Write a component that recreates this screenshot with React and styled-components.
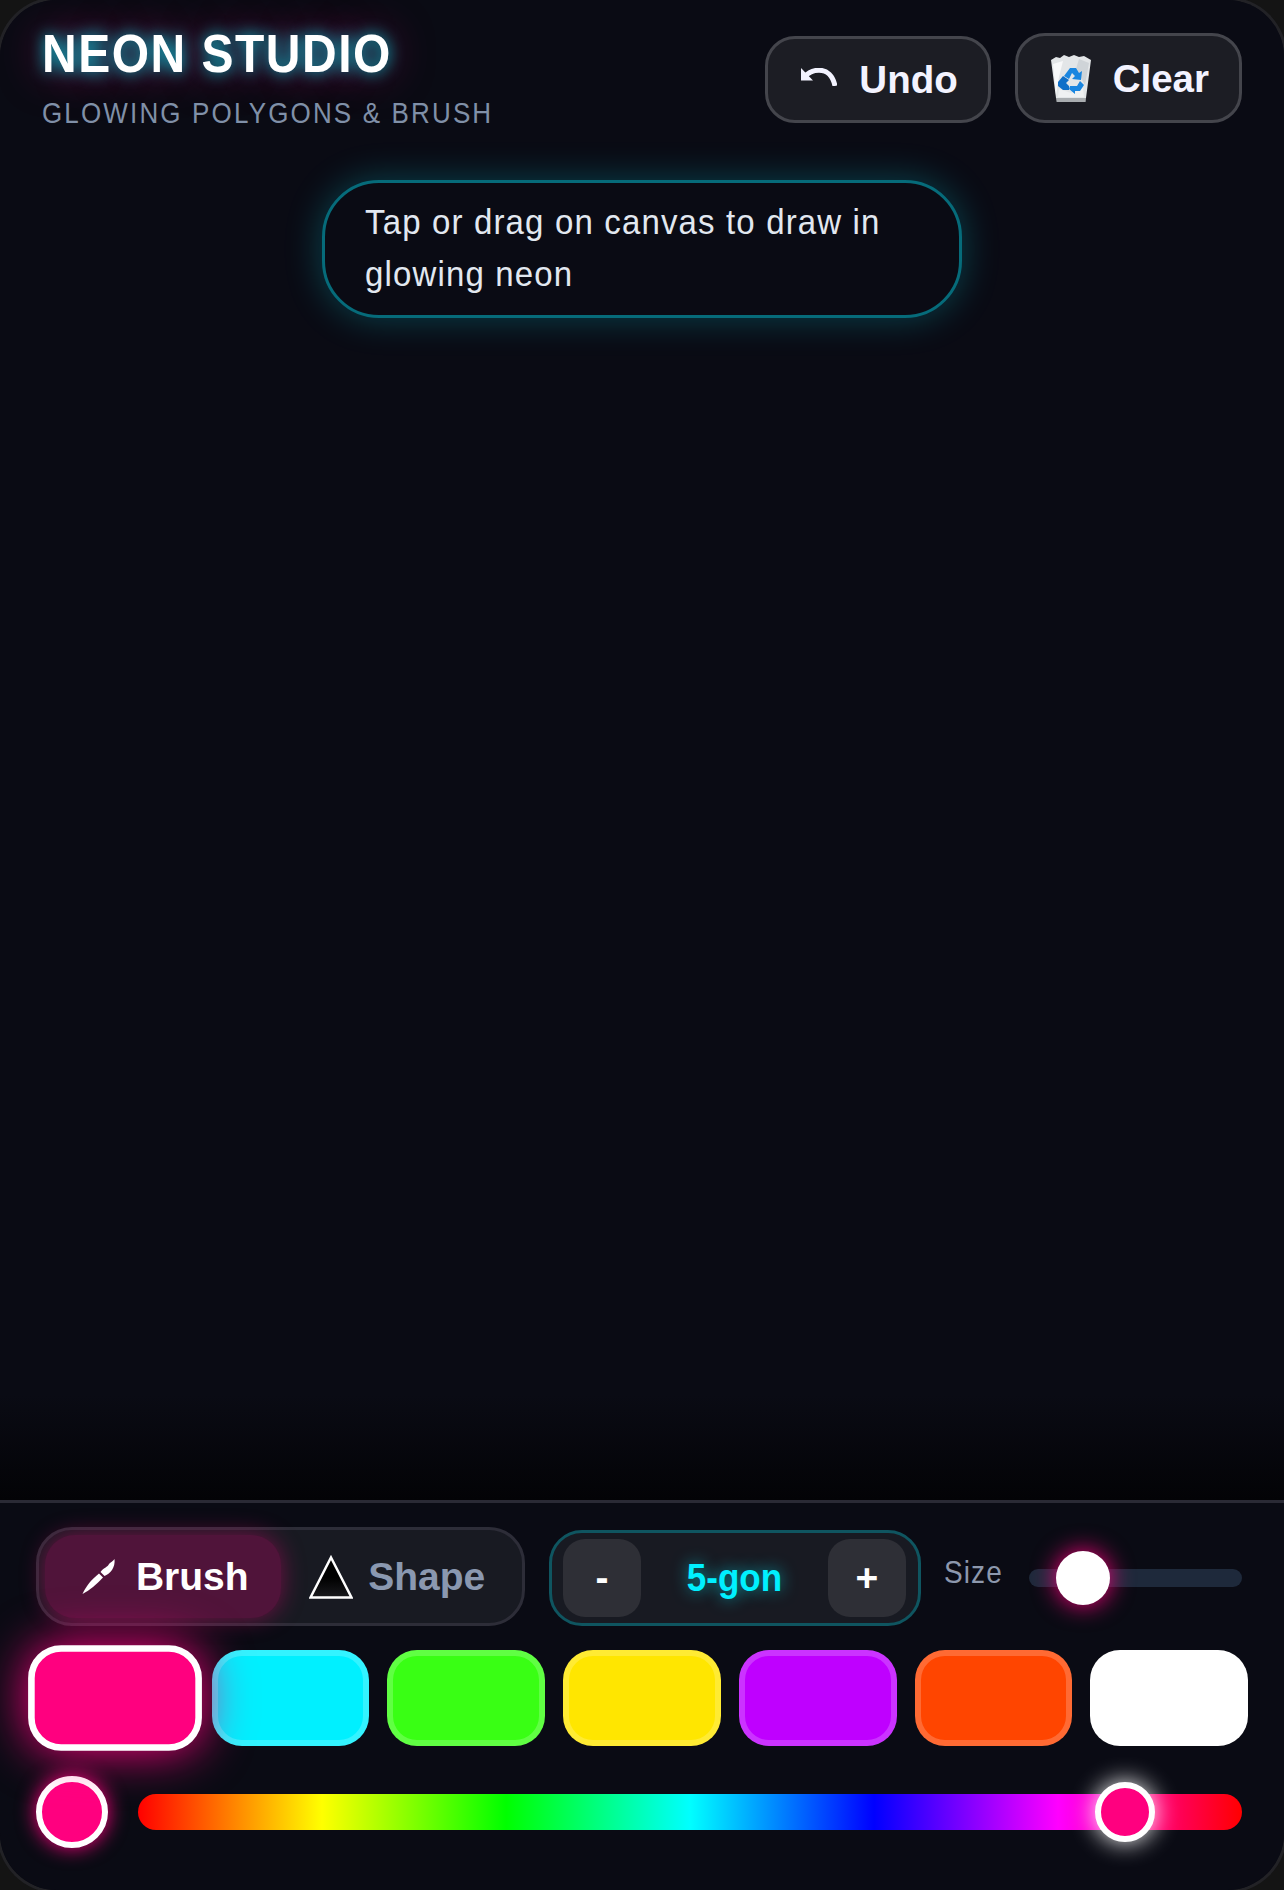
import React from "react";
import styled, { createGlobalStyle, css } from "styled-components";

const swatches = ["#ff007f", "#00f0ff", "#39ff14", "#ffe600", "#bf00ff", "#ff4500", "#ffffff"];

const UndoIcon = () => (
  <UndoSvg viewBox="0 0 36 18">
    <path d="M0 0V12.5H12Z" fill="#f3f3ff" />
    <path d="M3.5 9C8 3.5 13 2.2 18 2.2C26 2.2 32 8 34 18" fill="none" stroke="#f3f3ff" strokeWidth="5" />
  </UndoSvg>
);

const BinIcon = () => (
  <BinSvg viewBox="0 0 40 47">
    <path d="M0 5L5 2L9 3L13 0L18 2L23 0L28 2L33 1L40 5L35 43H5Z" fill="#e3e6e8" />
    <path d="M2 9L12 6L8 22L5 40Z" fill="#f8f9fa" />
    <path d="M28 4L38 8L34 30L25 14Z" fill="#cfd4d8" />
    <path d="M8 34L20 38L32 33L33 42H7Z" fill="#eff1f2" />
    <path d="M5 43H35L34.6 47H5.6Z" fill="#a9adb0" />
    <path d="M13 21L19 13H25L28 18L31 16L30 25L21 24L24 21L21 18L18 24Z" fill="#1a86e0" />
    <path d="M7 27L12 21L18 25L15 28L18 31V35H12L7 31Z" fill="#0f6fc8" />
    <path d="M19 31H26L29 26L33 30L29 36H24V39L18 34Z" fill="#1a86e0" />
  </BinSvg>
);

const BrushIcon = () => (
  <ModeSvg viewBox="0 0 44 35">
    <path d="M5.5 35C9 27 15 20 22 14.5L26 18.5C20 25 13 31 5.5 35Z" fill="#ffffff" />
    <path d="M23.5 13C26 9 31 8 32 5C33.5 3.5 36 2 37.5 0C38 4 37 8 35 11C33 14 30 16 27.5 17Z" fill="#ffffff" />
  </ModeSvg>
);

const TriangleIcon = () => (
  <TriangleSvg viewBox="0 0 44 44">
    <defs>
      <linearGradient id="triangleFill" x1="0" y1="0" x2="0" y2="1">
        <stop offset="0.5" stopColor="#000000" />
        <stop offset="1" stopColor="#1a1a1e" />
      </linearGradient>
    </defs>
    <path d="M22 2.5L42.5 42.5H1.5Z" fill="url(#triangleFill)" stroke="#ffffff" strokeWidth="2.5" />
  </TriangleSvg>
);

const App = () => {
  return (
    <>
      <GlobalStyle />
      <Screen>
        <Stage>
          <Header>
            <Brand>
              <Title>NEON STUDIO</Title>
              <Subtitle>GLOWING POLYGONS &amp; BRUSH</Subtitle>
            </Brand>
            <Actions>
              <ActionButton>
                <UndoIcon />
                Undo
              </ActionButton>
              <ActionButton>
                <BinIcon />
                Clear
              </ActionButton>
            </Actions>
          </Header>
          <Hint>
            <HintText $stretch={1.07}>Tap or drag on canvas to draw in glowing neon</HintText>
          </Hint>
        </Stage>
        <Panel>
          <ToolRow>
            <ModeToggle>
              <ModeButton $active>
                <BrushIcon />
                Brush
              </ModeButton>
              <ModeButton>
                <TriangleIcon />
                Shape
              </ModeButton>
            </ModeToggle>
            <Stepper>
              <StepButton>-</StepButton>
              <StepValue>5-gon</StepValue>
              <StepButton>+</StepButton>
            </Stepper>
            <SizeLabel>Size</SizeLabel>
            <SizeTrack>
              <SizeThumb />
            </SizeTrack>
          </ToolRow>
          <SwatchRow>
            {swatches.map((color, i) => (
              <Swatch key={color} $color={color} $selected={i === 0} />
            ))}
          </SwatchRow>
          <HueRow>
            <Preview />
            <HueTrack>
              <HueThumb />
            </HueTrack>
          </HueRow>
        </Panel>
      </Screen>
    </>
  );
};

export default App;

// the reference's regular text is narrow and tall, plain Liberation Sans is not
const tallText = css`
  display: block;
  transform: scaleY(${(props) => props.$stretch || 1.1});
  transform-origin: left bottom;
`;

const GlobalStyle = createGlobalStyle`
  html, body {
    margin: 0;
    padding: 0;
    background: #141414;
    overflow: hidden;
  }
  * {
    box-sizing: border-box;
  }
`;

const Screen = styled.div`
  width: 1284px;
  height: 1890px;
  display: flex;
  flex-direction: column;
  background: #0a0b14;
  border-radius: 57px;
  box-shadow: 0 0 0 3px #222226;
  overflow: hidden;
  font-family: "Liberation Sans", Arial, sans-serif;
`;

const Stage = styled.div`
  flex: 1;
  display: flex;
  flex-direction: column;
  align-items: center;
  background: linear-gradient(to bottom, #0a0b14 0%, #0a0b14 93%, #030306 100%);
`;

const Header = styled.div`
  width: 100%;
  display: flex;
  justify-content: space-between;
  align-items: flex-start;
  padding: 27px 42px 0;
`;

const Brand = styled.div`
  display: flex;
  flex-direction: column;
`;

const Title = styled.h1`
  ${tallText};
  margin: 0;
  font-size: 48px;
  line-height: 60px;
  font-weight: 700;
  letter-spacing: 1.5px;
  color: #ffffff;
  text-shadow: 0 0 15px rgba(0, 240, 255, 0.85), 0 0 42px rgba(255, 0, 127, 0.6);
`;

const Subtitle = styled.div`
  ${tallText};
  margin-top: 13px;
  font-size: 26px;
  line-height: 30px;
  letter-spacing: 2.15px;
  color: #8090a8;
`;

const Actions = styled.div`
  display: flex;
  align-items: flex-end;
  gap: 24px;
  margin-top: 6px;
`;

const ActionButton = styled.button`
  display: flex;
  align-items: center;
  gap: 22px;
  padding: 19px 30px 18px 33px;
  background: #1c1d24;
  border: 3px solid #44454c;
  border-radius: 30px;
  font: 700 38.5px / 44px "Liberation Sans", Arial, sans-serif;
  color: #f3f3ff;
`;

const UndoSvg = styled.svg`
  width: 36px;
  height: 18px;
  margin-top: -7px;
`;

const BinSvg = styled.svg`
  width: 40px;
  height: 47px;
`;

const Hint = styled.div`
  width: 640px;
  margin-top: 50px;
  padding: 14px 40px 16px;
  border: 3px solid #066b7a;
  border-radius: 57px;
  background: #0a0b14;
  box-shadow: 0 0 36px rgba(0, 240, 255, 0.25);
`;

const HintText = styled.span`
  ${tallText};
  height: 102px;
  transform-origin: left top;
  font-size: 33px;
  line-height: 47.66px;
  letter-spacing: 1.15px;
  color: #e2e8f0;
`;

const Panel = styled.div`
  display: flex;
  flex-direction: column;
  padding: 24px 36px 42px;
  border-top: 3px solid #2a2a35;
  background: #0a0b14;
`;

const ToolRow = styled.div`
  display: flex;
  align-items: center;
  padding-right: 6px;
`;

const ModeToggle = styled.div`
  width: 489px;
  height: 99px;
  display: flex;
  padding: 5px 6px;
  background: #181a22;
  border: 3px solid #2d2d38;
  border-radius: 36px;
`;

const ModeButton = styled.div`
  flex: 1;
  display: flex;
  align-items: center;
  justify-content: center;
  gap: 15px;
  border-radius: 30px;
  font-size: 39px;
  font-weight: 700;
  color: ${(props) => (props.$active ? "#ffffff" : "#8a98b0")};
  background: ${(props) => (props.$active ? "#50143a" : "transparent")};
  box-shadow: ${(props) => (props.$active ? "0 0 24px rgba(255, 0, 127, 0.4)" : "none")};
`;

const ModeSvg = styled.svg`
  width: 44px;
  height: 35px;
`;

const TriangleSvg = styled.svg`
  width: 44px;
  height: 44px;
  margin-left: -2px;
`;

const Stepper = styled.div`
  width: 372px;
  height: 96px;
  margin: 2px 0 0 24px;
  display: flex;
  align-items: center;
  justify-content: space-between;
  padding: 0 12px 0 11px;
  background: #181a22;
  border: 3px solid #0f5560;
  border-radius: 33px;
`;

const StepButton = styled.div`
  width: 78px;
  height: 78px;
  display: flex;
  align-items: center;
  justify-content: center;
  border-radius: 22px;
  background: #2e2f36;
  color: #ffffff;
  font-size: 39px;
  font-weight: 700;
`;

const StepValue = styled.div`
  ${tallText};
  transform-origin: center;
  color: #00f0ff;
  font-size: 35px;
  font-weight: 700;
  text-shadow: 0 0 15px rgba(0, 240, 255, 0.6);
`;

const SizeLabel = styled.div`
  ${tallText};
  margin: 0 0 8px 23px;
  transform-origin: center;
  font-size: 28px;
  letter-spacing: 1.1px;
  color: #8d98ad;
`;

const SizeTrack = styled.div`
  position: relative;
  width: 213px;
  height: 18px;
  margin: 3px 0 0 auto;
  border-radius: 9px;
  background: #1e293b;
`;

const SizeThumb = styled.div`
  position: absolute;
  left: 27px;
  top: -18px;
  width: 54px;
  height: 54px;
  border-radius: 50%;
  background: #ffffff;
  box-shadow: 0 0 24px #ff007f;
`;

const SwatchRow = styled.div`
  display: flex;
  gap: 18px;
  margin-top: 24px;
`;

const Swatch = styled.div`
  flex: 1;
  height: 96px;
  border-radius: 30px;
  background: ${(props) => props.$color};
  border: 6px solid ${(props) => (props.$selected ? "#ffffff" : "rgba(255, 255, 255, 0.2)")};
  transform: ${(props) => (props.$selected ? "scale(1.1)" : "none")};
  box-shadow: ${(props) => (props.$selected ? `0 0 45px ${props.$color}` : "none")};
`;

const HueRow = styled.div`
  display: flex;
  align-items: center;
  gap: 30px;
  margin-top: 30px;
  padding-right: 6px;
`;

const Preview = styled.div`
  width: 72px;
  height: 72px;
  flex-shrink: 0;
  border-radius: 50%;
  background: #ff007f;
  border: 6px solid #ffffff;
  box-shadow: 0 0 20px #ff007f;
`;

const HueTrack = styled.div`
  position: relative;
  flex: 1;
  height: 36px;
  border-radius: 18px;
  background: linear-gradient(to right, #f00, #ff0, #0f0, #0ff, #00f, #f0f, #f00);
`;

const HueThumb = styled.div`
  position: absolute;
  left: 957px;
  top: -12px;
  width: 60px;
  height: 60px;
  border-radius: 50%;
  background: #ff007f;
  border: 6px solid #ffffff;
  box-shadow: 0 0 24px #ffffff;
`;
